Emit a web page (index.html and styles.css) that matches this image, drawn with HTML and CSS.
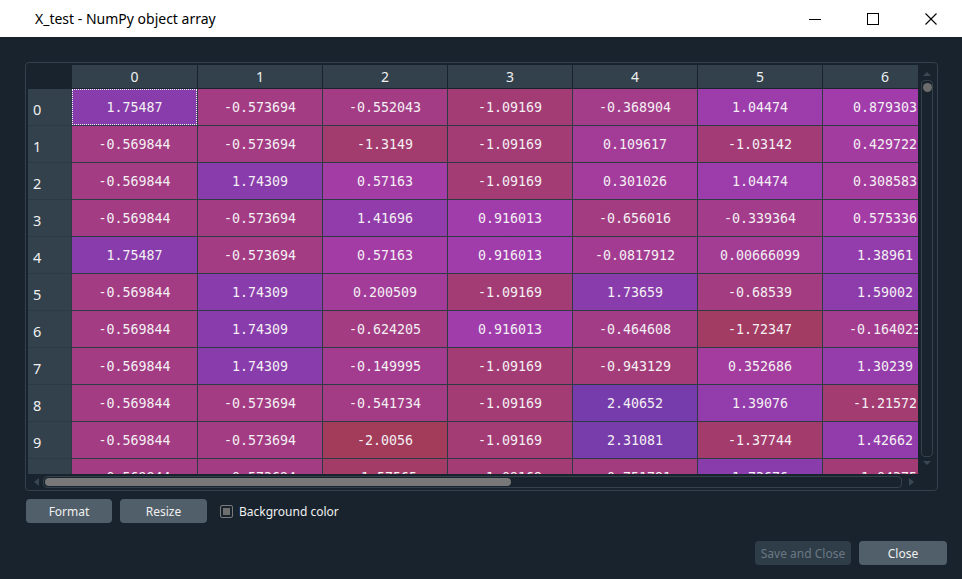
FILE: index.html
```html
<!DOCTYPE html>
<html>
<head>
<meta charset="utf-8">
<title>X_test - NumPy object array</title>
<link rel="stylesheet" href="styles.css">
</head>
<body>
<div class="window">
  <header class="titlebar">
    <span class="title">X_test - NumPy object array</span>
    <div class="controls">
      <span class="ctl"><svg width="12" height="12" viewBox="0 0 12 12"><line x1="0" y1="6.5" x2="12" y2="6.5" stroke="#000" stroke-width="1"/></svg></span>
      <span class="ctl"><svg width="12" height="12" viewBox="0 0 12 12"><rect x="0.5" y="0.5" width="11" height="11" fill="none" stroke="#000" stroke-width="1"/></svg></span>
      <span class="ctl"><svg width="12" height="12" viewBox="0 0 12 12"><path d="M0.5 0.5 L11.5 11.5 M11.5 0.5 L0.5 11.5" stroke="#000" stroke-width="1.1" fill="none"/></svg></span>
    </div>
  </header>
  <main class="content">
    <section class="frame">
      <div class="frame-top">
        <div class="viewport">
          <div class="head-grid" id="head"></div>
          <div class="body-grid" id="grid"></div>
        </div>
        <div class="vscroll">
          <span class="arrow-up"></span>
          <div class="vgroove"><span class="vhandle"></span></div>
          <span class="arrow-down"></span>
        </div>
      </div>
      <div class="hscroll">
        <span class="arrow-left"></span>
        <div class="hgroove"><span class="hhandle"></span></div>
        <span class="arrow-right"></span>
      </div>
    </section>
    <div class="toolbar">
      <button class="btn btn-format">Format</button>
      <button class="btn btn-resize">Resize</button>
      <label class="check"><span class="box"><span class="box-fill"></span></span><span class="check-label">Background color</span></label>
    </div>
    <div class="footer">
      <button class="btn btn-save" disabled>Save and Close</button>
      <button class="btn btn-close">Close</button>
    </div>
  </main>
</div>
<script src="script.js"></script>
</body>
</html>
```

FILE: styles.css
```css
* { box-sizing: border-box; }
html, body { margin: 0; padding: 0; }
body {
  width: 962px;
  height: 579px;
  overflow: hidden;
  background: #19232d;
  font-family: "Noto Sans", "Open Sans", sans-serif;
}
.window { display: flex; flex-direction: column; height: 579px; }

.titlebar {
  flex: none;
  height: 37px;
  background: #ffffff;
  display: flex;
  align-items: center;
  justify-content: space-between;
  padding-left: 35px;
}
.title { font-size: 14px; color: #000; }
.controls { display: flex; height: 100%; padding-right: 2px; }
.ctl { width: 58px; display: flex; align-items: center; justify-content: center; }

.content {
  flex: 1;
  background: #19232d;
  padding: 25px 15px 0 25px;
  display: flex;
  flex-direction: column;
}

.frame {
  width: 913px;
  height: 429px;
  border: 1px solid #32414b;
  border-radius: 4px;
  padding: 2px 3px 2px 2px;
  display: flex;
  flex-direction: column;
}
.frame-top { display: flex; height: 409px; }
.viewport { width: 890px; height: 409px; overflow: hidden; }

.head-grid, .body-grid {
  display: grid;
  grid-template-columns: 43px 125px repeat(6, 124px);
  column-gap: 1px;
  width: max-content;
}
.head-grid { background: #19232d; height: 24px; padding-bottom: 1px; }
.head-grid div {
  background: #32414b;
  color: #f0f0f0;
  font-size: 14px;
  display: flex;
  align-items: center;
  justify-content: center;
}
.head-grid .corner { background: #19232d; }

.body-grid {
  background: #2c3b43;
  row-gap: 1px;
  grid-auto-rows: 36px;
}
.rowhead {
  background: #32414b;
  color: #f0f0f0;
  font-size: 14.5px;
  display: flex;
  align-items: center;
  padding: 4px 0 0 5px;
}
.cell {
  background-color: #19232d;
  background-image: linear-gradient(var(--c), var(--c));
  color: #f4f0f4;
  font-family: "DejaVu Sans Mono", "Liberation Mono", monospace;
  font-size: 13.3px;
  display: flex;
  align-items: center;
  justify-content: center;
  white-space: nowrap;
}
.cell.sel { outline: 1px dotted #ffffff; outline-offset: -1px; }

.vscroll {
  width: 16px;
  height: 407px;
  display: flex;
  flex-direction: column;
  align-items: center;
  padding-top: 7px;
}
.arrow-up {
  width: 0; height: 0;
  border-left: 4.5px solid transparent;
  border-right: 4.5px solid transparent;
  border-bottom: 4px solid #3a4853;
  margin-left: 1px;
}
.arrow-down {
  width: 0; height: 0;
  border-left: 4.5px solid transparent;
  border-right: 4.5px solid transparent;
  border-top: 4px solid #3a4853;
  margin-top: 4px;
  margin-left: 1px;
}
.vgroove {
  margin-top: 4px;
  width: 12px;
  height: 377px;
  border: 1px solid #32414b;
  border-radius: 4px;
  padding: 2px 0 0 1px;
  margin-left: 1px;
}
.vhandle {
  display: block;
  width: 9px;
  height: 9px;
  border-radius: 50%;
  background: #6c6c6c;
}

.hscroll {
  height: 14px;
  display: flex;
  align-items: flex-start;
  padding: 2px 0 0 6px;
}
.arrow-left {
  width: 0; height: 0;
  margin-top: 2px;
  border-top: 4px solid transparent;
  border-bottom: 4px solid transparent;
  border-right: 5px solid #3a4853;
}
.arrow-right {
  width: 0; height: 0;
  margin-top: 2px;
  margin-left: 7px;
  border-top: 4px solid transparent;
  border-bottom: 4px solid transparent;
  border-left: 5px solid #3a4853;
}
.hgroove {
  margin-left: 4px;
  width: 859px;
  height: 12px;
  border: 1px solid #32414b;
  border-radius: 4px;
  padding: 1px;
}
.hhandle {
  display: block;
  width: 466px;
  height: 8px;
  border-radius: 4px;
  background: #787878;
}

.toolbar {
  display: flex;
  align-items: center;
  margin-top: 8px;
  padding-left: 1px;
  height: 24px;
}
.btn {
  height: 24px;
  border: none;
  border-radius: 4px;
  background: #505f69;
  color: #f0f0f0;
  font-family: "Noto Sans", "Open Sans", sans-serif;
  font-size: 12px;
  padding: 0;
}
.btn-format { width: 86px; }
.btn-resize { width: 87px; margin-left: 8px; }
.check { display: flex; align-items: center; margin-left: 13px; }
.box {
  width: 13px; height: 13px;
  border: 1px solid #7a7a7a;
  border-radius: 2px;
  padding: 2px;
  background: #19232d;
}
.box-fill { display: block; width: 100%; height: 100%; background: #6e6e6e; }
.check-label { color: #f0f0f0; font-size: 12px; margin-left: 6px; }

.footer {
  display: flex;
  justify-content: flex-end;
  margin-top: 18px;
}
.btn-save { width: 96px; background: #2f3d48; color: #6b7884; }
.btn-close { width: 88px; margin-left: 8px; }
```

FILE: script.js
```js
var rows = [
  ["1.75487","-0.573694","-0.552043","-1.09169","-0.368904","1.04474","0.879303"],
  ["-0.569844","-0.573694","-1.3149","-1.09169","0.109617","-1.03142","0.429722"],
  ["-0.569844","1.74309","0.57163","-1.09169","0.301026","1.04474","0.308583"],
  ["-0.569844","-0.573694","1.41696","0.916013","-0.656016","-0.339364","0.575336"],
  ["1.75487","-0.573694","0.57163","0.916013","-0.0817912","0.00666099","1.38961"],
  ["-0.569844","1.74309","0.200509","-1.09169","1.73659","-0.68539","1.59002"],
  ["-0.569844","1.74309","-0.624205","0.916013","-0.464608","-1.72347","-0.164023"],
  ["-0.569844","1.74309","-0.149995","-1.09169","-0.943129","0.352686","1.30239"],
  ["-0.569844","-0.573694","-0.541734","-1.09169","2.40652","1.39076","-1.21572"],
  ["-0.569844","-0.573694","-2.0056","-1.09169","2.31081","-1.37744","1.42662"],
  ["-0.569844","-0.573694","-1.57565","-1.09169","-0.751791","1.73676","-1.04375"]
];
var vmax = 4.73, vmin = -2.70;
var head = document.getElementById("head");
var grid = document.getElementById("grid");
var corner = document.createElement("div");
corner.className = "corner";
head.appendChild(corner);
for (var c = 0; c < 7; c++) {
  var h = document.createElement("div");
  h.textContent = String(c);
  head.appendChild(h);
}
rows.forEach(function (r, i) {
  var rh = document.createElement("div");
  rh.className = "rowhead";
  rh.textContent = String(i);
  grid.appendChild(rh);
  r.forEach(function (txt, j) {
    var v = parseFloat(txt);
    var hue = 0.66 + 0.33 * (vmax - v) / (vmax - vmin);
    var cell = document.createElement("div");
    cell.className = "cell" + (i === 0 && j === 0 ? " sel" : "");
    cell.style.setProperty("--c", "hsla(" + (hue * 360).toFixed(1) + ", 100%, 65%, 0.6)");
    cell.textContent = txt;
    grid.appendChild(cell);
  });
});
```
